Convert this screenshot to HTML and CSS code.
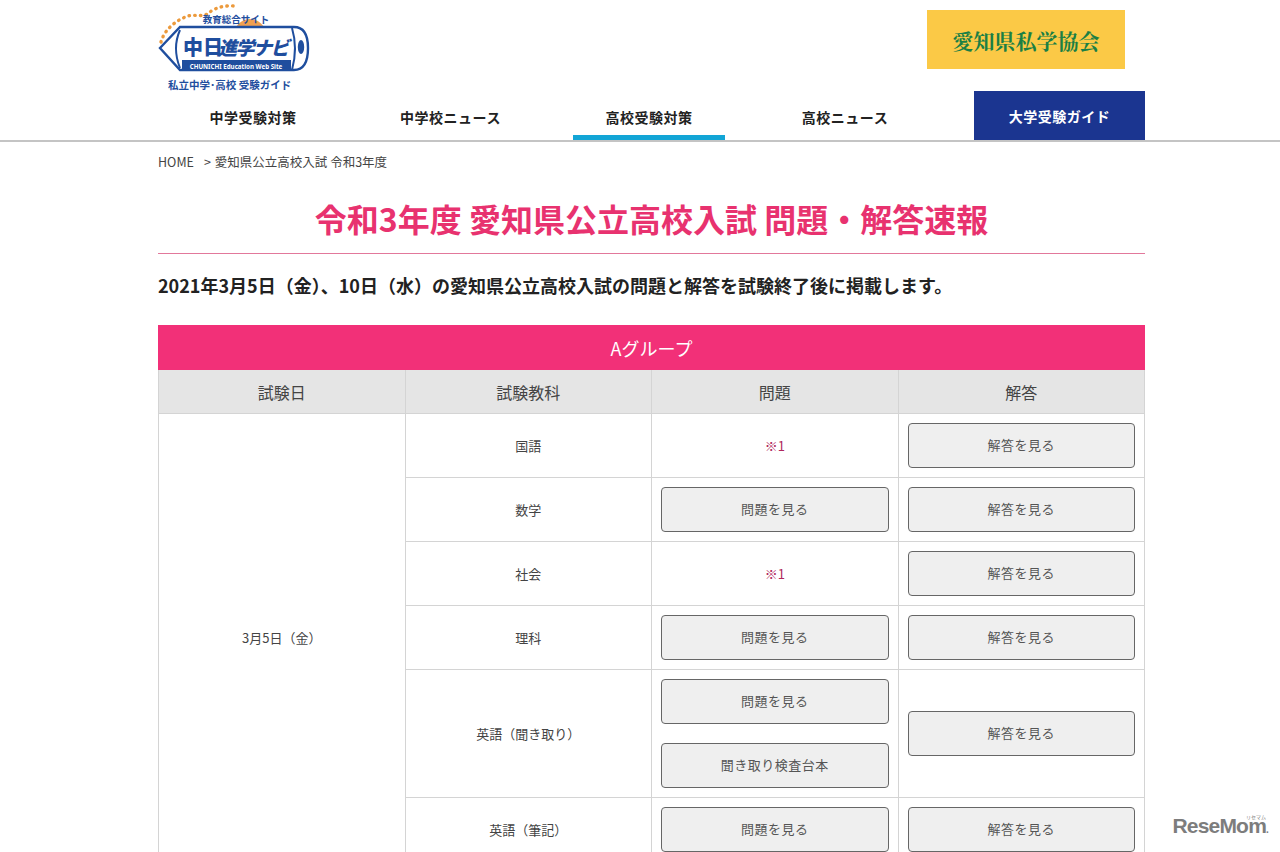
FILE: index.html
```html
<!DOCTYPE html>
<html lang="ja">
<head>
<meta charset="utf-8">
<title>令和3年度 愛知県公立高校入試 問題・解答速報</title>
<link rel="stylesheet" href="styles.css">
</head>
<body>
<header class="site-header">
  <div class="wrap">
    <div class="top">
      <a class="logo" href="#">
        <svg width="152" height="92" viewBox="0 0 152 92">
          <path d="M3 42C6 30 18 20 30 16C38 14 46 18 52 12C58 7 72 4 80 7" fill="none" stroke="#ec9a3c" stroke-width="3.4" stroke-linecap="round" stroke-dasharray="0.5 5.2"/>
          <circle cx="92" cy="35" r="16" fill="#f0a050"/>
          <path d="M2 48L22 27H136Q150 27 150 48Q150 70 136 70H22Z" fill="#fff" stroke="#1f4e9e" stroke-width="2.4"/>
          <path d="M22 30Q14 48 22 68" fill="none" stroke="#1f4e9e" stroke-width="2"/>
          <path d="M134 28Q140 48 134 70" fill="none" stroke="#1f4e9e" stroke-width="2"/>
          <ellipse cx="143" cy="47" rx="3.2" ry="7" fill="#1f4e9e"/>
          <rect x="24" y="60" width="109" height="11" fill="#1f4e9e"/>
          <text class="logo-sub" x="78" y="23" text-anchor="middle">教育総合サイト</text>
          <text class="logo-main" x="25" y="55">中日</text>
          <text class="logo-main logo-main-i" x="60" y="55">進学ナビ</text>
          <text class="logo-en" x="78" y="69" text-anchor="middle">CHUNICHI Education Web Site</text>
          <text class="logo-guide" x="10" y="89">私立中学･高校 受験ガイド</text>
        </svg>
      </a>
      <a class="assoc" href="#">愛知県私学協会</a>
    </div>
    <nav class="nav">
      <a class="nav-item" href="#">中学受験対策</a>
      <a class="nav-item" href="#">中学校ニュース</a>
      <a class="nav-item nav-current" href="#">高校受験対策</a>
      <a class="nav-item" href="#">高校ニュース</a>
      <a class="nav-guide" href="#">大学受験ガイド</a>
    </nav>
  </div>
</header>
<main class="wrap">
  <p class="crumbs"><a href="#">HOME</a><span class="crumb-sep">&gt;</span>愛知県公立高校入試 令和3年度</p>
  <h1 class="title">令和3年度 愛知県公立高校入試 問題・解答速報</h1>
  <p class="lead">2021年3月5日（金）、10日（水）の愛知県公立高校入試の問題と解答を試験終了後に掲載します。</p>
  <table class="exam">
    <colgroup><col class="c"><col class="c"><col class="c"><col class="c"></colgroup>
    <thead>
      <tr><th class="group" colspan="4">Aグループ</th></tr>
      <tr><th class="head">試験日</th><th class="head">試験教科</th><th class="head">問題</th><th class="head">解答</th></tr>
    </thead>
    <tbody>
      <tr>
        <td rowspan="6">3月5日（金）</td>
        <td>国語</td>
        <td class="note">※1</td>
        <td class="act"><a class="btn" href="#">解答を見る</a></td>
      </tr>
      <tr>
        <td>数学</td>
        <td class="act"><a class="btn" href="#">問題を見る</a></td>
        <td class="act"><a class="btn" href="#">解答を見る</a></td>
      </tr>
      <tr>
        <td>社会</td>
        <td class="note">※1</td>
        <td class="act"><a class="btn" href="#">解答を見る</a></td>
      </tr>
      <tr>
        <td>理科</td>
        <td class="act"><a class="btn" href="#">問題を見る</a></td>
        <td class="act"><a class="btn" href="#">解答を見る</a></td>
      </tr>
      <tr>
        <td>英語（聞き取り）</td>
        <td class="act"><div class="btn-stack"><a class="btn" href="#">問題を見る</a><a class="btn" href="#">聞き取り検査台本</a></div></td>
        <td class="act"><a class="btn" href="#">解答を見る</a></td>
      </tr>
      <tr>
        <td>英語（筆記）</td>
        <td class="act"><a class="btn" href="#">問題を見る</a></td>
        <td class="act"><a class="btn" href="#">解答を見る</a></td>
      </tr>
    </tbody>
  </table>
</main>
<div class="watermark"><span class="wm-kana">リセマム</span>ReseMom<span class="wm-dot">.</span></div>
</body>
</html>
```
FILE: styles.css
```css
* { box-sizing: border-box; }
html, body { margin: 0; height: 852px; overflow: hidden; }
body {
  background: #fff;
  color: #333;
  font-family: "Noto Sans CJK JP", "Noto Sans", sans-serif;
  font-size: 13px;
}
a { color: inherit; text-decoration: none; }
.wrap { width: 987px; margin-left: 158px; }
.site-header { height: 142px; border-bottom: 2px solid #c4c4c4; }
.top { height: 91px; display: flex; justify-content: space-between; }
.logo { display: block; height: 91px; }
.logo svg { display: block; }
.logo-sub { font: 700 9.5px "Noto Sans CJK JP", sans-serif; fill: #1f4e9e; }
.logo-main { font: 900 20px "Noto Sans CJK JP", sans-serif; fill: #1f4e9e; }
.logo-main-i { font-style: italic; font-size: 19px; letter-spacing: -1.5px; }
.logo-en { font: 700 6.2px "Noto Sans", sans-serif; fill: #fff; }
.logo-guide { font: 700 10.5px "Noto Sans CJK JP", sans-serif; fill: #1f4e9e; }
.assoc {
  width: 198px;
  height: 59px;
  margin: 10px 20px 0 0;
  background: #fbc946;
  color: #1a7f45;
  display: flex;
  align-items: center;
  justify-content: center;
  font-family: "Noto Serif CJK JP", "Liberation Serif", "Noto Sans CJK JP", serif;
  font-size: 21px;
  font-weight: 700;
}
.nav { display: flex; height: 49px; }
.nav-item {
  width: 152px;
  margin-right: 47px;
  height: 49px;
  padding-top: 15px;
  text-align: center;
  font-size: 14px;
  font-weight: 700;
  line-height: 22px;
  letter-spacing: 0.5px;
  color: #222;
}
.nav-item:first-child { width: 190px; margin-right: 0; padding-right: 0; }
.nav-item:nth-child(2) { width: 205px; margin-right: 20px; }
.nav-item:nth-child(3) { width: 152px; margin-right: 20px; }
.nav-item:nth-child(4) { width: 200px; margin-right: 20px; margin-left: 0; }
.nav-current { border-bottom: 5px solid #12a5d6; }
.nav-guide {
  width: 171px;
  margin-left: auto;
  height: 49px;
  background: #1b3590;
  color: #fff;
  font-size: 14px;
  font-weight: 700;
  letter-spacing: 0.5px;
  display: flex;
  align-items: center;
  justify-content: center;
}
.crumbs { margin: 11px 0 0; font-size: 12.5px; line-height: 18px; color: #444; }
.crumb-sep { margin: 0 4px 0 10px; }
.title {
  margin: 24px 0 0;
  height: 59px;
  border-bottom: 1px solid #e2789b;
  text-align: center;
  color: #e8326f;
  font-size: 32px;
  font-weight: 700;
  line-height: 46px;
}
.lead { margin: 18px 0 0; font-size: 18px; font-weight: 700; line-height: 26px; color: #222; }
.exam {
  width: 987px;
  margin-top: 27px;
  table-layout: fixed;
  border-collapse: collapse;
}
.exam th, .exam td { border: 1px solid #d4d4d4; text-align: center; padding: 0; font-weight: 400; }
.exam .group { height: 44px; background: #f23078; border-color: #f23078; color: #fff; font-size: 18px; }
.exam .head { height: 44px; background: #e5e5e5; font-size: 16px; color: #444; }
.exam td { height: 63px; font-size: 13px; color: #444; }
.exam .note { color: #b0275c; }
.exam .act { padding: 9px; }
.btn {
  display: block;
  height: 45px;
  line-height: 41px;
  background: #efefef;
  border: 1px solid #666;
  border-radius: 4px;
  color: #555;
  font-size: 13px;
  letter-spacing: 0.5px;
}
.btn-stack { display: flex; flex-direction: column; gap: 19px; }
.watermark {
  position: absolute;
  right: 12px;
  top: 814px;
  font: 700 21px "Liberation Sans", sans-serif;
  letter-spacing: -0.8px;
  color: #7d7d7d;
}
.wm-kana { position: absolute; right: 2px; top: -1px; font: 400 5px "Noto Sans CJK JP", sans-serif; letter-spacing: 0; }
.wm-dot { font-size: 10px; }
```
